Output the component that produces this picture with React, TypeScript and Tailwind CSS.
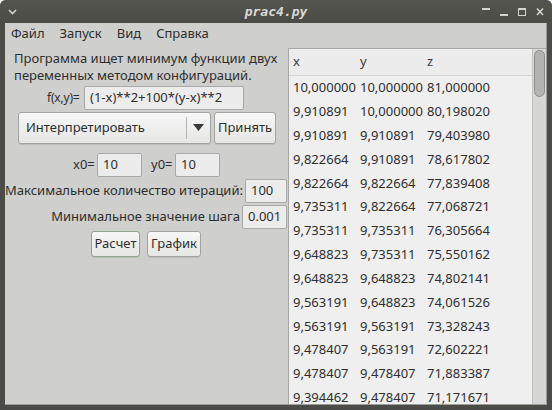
import React from "react";

const rows = [
  ["10,000000", "10,000000", "81,000000"],
  ["9,910891", "10,000000", "80,198020"],
  ["9,910891", "9,910891", "79,403980"],
  ["9,822664", "9,910891", "78,617802"],
  ["9,822664", "9,822664", "77,839408"],
  ["9,735311", "9,822664", "77,068721"],
  ["9,735311", "9,735311", "76,305664"],
  ["9,648823", "9,735311", "75,550162"],
  ["9,648823", "9,648823", "74,802141"],
  ["9,563191", "9,648823", "74,061526"],
  ["9,563191", "9,563191", "73,328243"],
  ["9,478407", "9,563191", "72,602221"],
  ["9,478407", "9,478407", "71,883387"],
  ["9,394462", "9,478407", "71,171671"],
];

function Input({ value, w }: { value: string; w: string }) {
  return (
    <div
      className={`${w} h-[24px] bg-[#ececec] border border-[#a9a9a7] rounded-[2px] flex items-center pl-[5px] text-[#2e2e2e]`}
    >
      {value}
    </div>
  );
}

function Btn({ label, w, h, green }: { label: string; w: string; h: string; green?: boolean }) {
  return (
    <div
      className={`${w} ${h} rounded-[3px] border ${green ? "border-[#8ea48c]" : "border-[#a3a3a1]"} bg-gradient-to-b from-[#f7f7f7] to-[#e6e6e5] flex items-center justify-center text-[#2e2e2e] shadow-[0_1px_0_rgba(0,0,0,0.08)]`}
    >
      {label}
    </div>
  );
}

export default function App() {
  return (
    <div
      className="w-[552px] h-[410px] bg-[#4b4c47] rounded-t-[6px] flex flex-col overflow-hidden"
      style={{ fontFamily: '"Noto Sans", sans-serif' }}
    >
      {/* title bar */}
      <div className="h-[23px] relative flex items-center justify-center shrink-0 bg-gradient-to-b from-[#55564f] to-[#4a4b45]">
        <svg className="absolute left-[8px] top-[9px]" width="9" height="6" viewBox="0 0 9 6">
          <path d="M1 1 L4.5 4.5 L8 1" stroke="#cfcfcc" strokeWidth="1.6" fill="none" />
        </svg>
        <span
          className="text-[13px] italic font-bold text-[#dadad6] tracking-[0px]"
          style={{ fontFamily: '"DejaVu Sans Mono", monospace' }}
        >
          prac4.py
        </span>
        <svg className="absolute left-[482px] top-[7px]" width="64" height="10" viewBox="0 0 64 10">
          <rect x="0" y="1" width="8" height="2" fill="#d2d2ce" />
          <rect x="18" y="7" width="8" height="2" fill="#d2d2ce" />
          <rect x="36.5" y="1.5" width="7" height="7" stroke="#d2d2ce" strokeWidth="1" fill="none" />
          <rect x="36" y="1" width="8" height="2" fill="#d2d2ce" />
          <path d="M55 1.5 L61 8 M61 1.5 L55 8" stroke="#d2d2ce" strokeWidth="1.6" />
        </svg>
      </div>

      {/* body */}
      <div className="flex-1 pl-[5px] pr-[5px] pb-[5px] flex min-h-0">
        <div className="flex-1 bg-[#cfcfcd] flex flex-col min-h-0 border-r border-b border-[#9c9c98] text-[13px] text-[#2e2e2e]">
          {/* menu bar */}
          <div className="h-[21px] shrink-0 flex items-center gap-[15px] pl-[6px] text-[#2e2e2e]">
            <span>Файл</span>
            <span>Запуск</span>
            <span>Вид</span>
            <span>Справка</span>
          </div>

          <div className="flex-1 flex min-h-0">
            {/* left panel */}
            <div className="w-[283px] shrink-0 flex flex-col">
              <div className="pt-[6px] pl-[9px] leading-[17px]">
                <div>Программа ищет минимум функции двух</div>
                <div>переменных методом конфигураций.</div>
              </div>
              <div className="mt-[2px] flex items-center pl-[42px]">
                <span className="w-[37px] text-[12px] tracking-[-0.2px]">f(x,y)=</span>
                <Input value="(1-x)**2+100*(y-x)**2" w="w-[160px]" />
              </div>
              <div className="mt-[2px] flex pl-[13px] gap-[3px]">
                <div className="w-[193px] h-[32px] rounded-[3px] border border-[#a3a3a1] bg-gradient-to-b from-[#f7f7f7] to-[#e6e6e5] flex items-center shadow-[0_1px_0_rgba(0,0,0,0.08)]">
                  <span className="flex-1 pl-[7px]">Интерпретировать</span>
                  <div className="w-px h-[22px] bg-[#b5b5b3]" />
                  <svg className="mx-[6px]" width="11" height="8" viewBox="0 0 11 8">
                    <path d="M0 0 L11 0 L5.5 7 Z" fill="#3a3a3a" />
                  </svg>
                </div>
                <Btn label="Принять" w="w-[62px]" h="h-[32px]" />
              </div>
              <div className="mt-[9px] flex items-center pl-[68px]">
                <span className="w-[24px]">x0=</span>
                <Input value="10" w="w-[45px]" />
                <span className="ml-[9px] w-[24px]">y0=</span>
                <Input value="10" w="w-[45px]" />
              </div>
              <div className="mt-[2px] flex items-center justify-end pr-[1px]">
                <span className="mr-[2px] whitespace-nowrap">Максимальное количество итераций:</span>
                <Input value="100" w="w-[45px]" />
              </div>
              <div className="mt-[2px] flex items-center justify-end pr-[1px]">
                <span className="mr-[2px] whitespace-nowrap">Минимальное значение шага</span>
                <Input value="0.001" w="w-[45px]" />
              </div>
              <div className="mt-[2px] flex pl-[86px] gap-[7px]">
                <Btn label="Расчет" w="w-[49px]" h="h-[26px]" green />
                <Btn label="График" w="w-[54px]" h="h-[26px]" />
              </div>
            </div>

            {/* table */}
            <div className="flex-1 mt-[4px] flex min-h-0 border-t border-l border-[#a7a7a5] overflow-hidden">
              <div className="flex-1 bg-[#efefef] flex flex-col overflow-hidden">
                <div className="h-[27px] shrink-0 flex items-center border-b border-[#d4d4d2] bg-[#ececec] text-[#3a3a3a]">
                  <span className="pl-[4px] w-[71px]">x</span>
                  <span className="w-[67px]">y</span>
                  <span>z</span>
                </div>
                {rows.map((r, i) => (
                  <div key={i} className="h-[23.85px] shrink-0 flex items-center text-[#2e2e2e]">
                    <span className="pl-[4px] w-[71px]">{r[0]}</span>
                    <span className="w-[67px]">{r[1]}</span>
                    <span>{r[2]}</span>
                  </div>
                ))}
              </div>
              <div className="w-[14px] shrink-0 bg-[#d6d6d4] border-l border-[#c2c2c0] pt-[1px] pl-[1px]">
                <div className="w-[11px] h-[47px] rounded-full bg-[#b3b3b1] border border-[#8f8f8d]" />
              </div>
            </div>
          </div>
        </div>
      </div>
    </div>
  );
}
